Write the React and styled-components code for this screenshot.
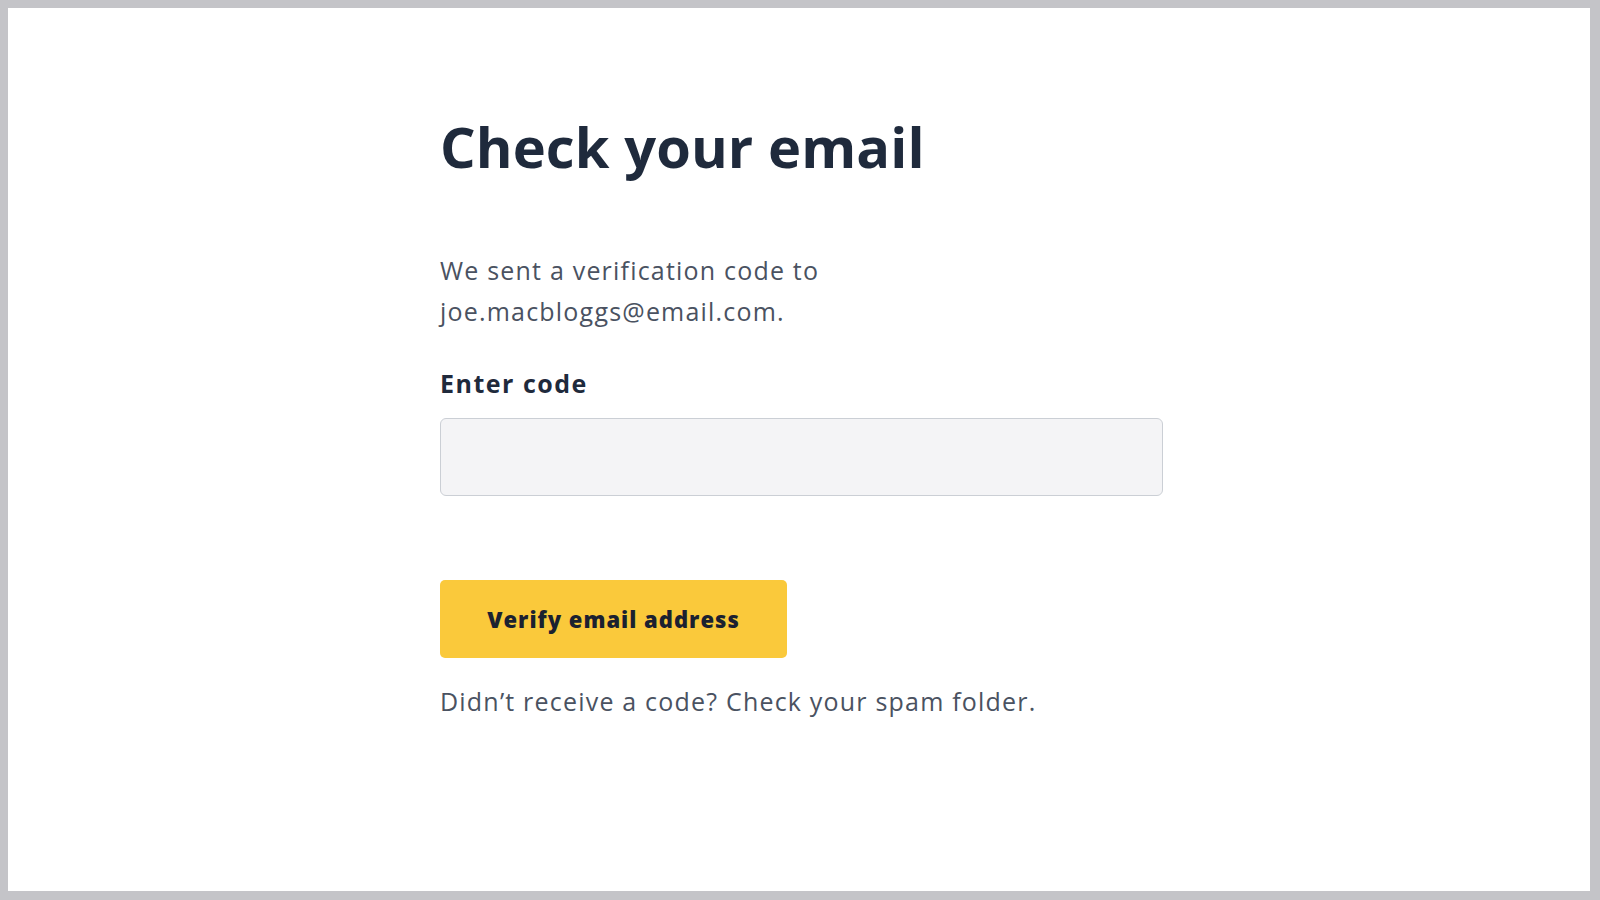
import React from 'react';
import styled, { createGlobalStyle } from 'styled-components';

const GlobalStyle = createGlobalStyle`
    html, body {
        margin: 0;
        padding: 0;
        background: #c4c4c8;
    }
    * {
        box-sizing: border-box;
    }
`;

const Frame = styled.div`
    height: 900px;
    padding: 8px 10px 9px 8px;
    background: #c4c4c8;
`;

const Sheet = styled.main`
    height: 100%;
    background: #ffffff;
    padding: 104px 0 0 432px;
    font-family: "Open Sans", "Noto Sans", sans-serif;
`;

const Column = styled.div`
    display: flex;
    flex-direction: column;
    align-items: flex-start;
    width: 723px;
`;

const Title = styled.h1`
    margin: 0 0 70px;
    font-size: 56px;
    line-height: 68px;
    font-weight: 700;
    color: #1f2a3c;
    letter-spacing: 0.1px;
`;

const Text = styled.p`
    margin: ${({ $gap }) => $gap || 0};
    font-size: 25px;
    line-height: 41px;
    color: #4a5261;
    letter-spacing: 1.2px;
`;

const Label = styled.label`
    margin-top: 35px;
    font-size: 25px;
    line-height: 32px;
    font-weight: 700;
    color: #1f2a3c;
    letter-spacing: 1.5px;
`;

const CodeInput = styled.input`
    margin-top: 19px;
    width: 723px;
    height: 78px;
    background: #f4f4f6;
    border: 1.5px solid #cbcfd5;
    border-radius: 6px;
    font: inherit;
    font-size: 25px;
    padding: 0 20px;
    outline: none;
`;

const VerifyButton = styled.button`
    margin-top: 84px;
    width: 347px;
    height: 78px;
    background: #fac93b;
    border: none;
    border-radius: 5px;
    font-family: "Open Sans", "Noto Sans", sans-serif;
    font-size: 22px;
    font-weight: 800;
    color: #1b2130;
    letter-spacing: 1px;
    cursor: pointer;
`;

export default function App() {
    return (
        <>
            <GlobalStyle />
            <Frame>
                <Sheet>
                    <Column>
                        <Title>Check your email</Title>
                        <Text>
                            We sent a verification code to
                            <br />
                            joe.macbloggs@email.com.
                        </Text>
                        <Label htmlFor="code">Enter code</Label>
                        <CodeInput id="code" type="text" />
                        <VerifyButton type="button">Verify email address</VerifyButton>
                        <Text $gap="23px 0 0">Didn’t receive a code? Check your spam folder.</Text>
                    </Column>
                </Sheet>
            </Frame>
        </>
    );
}
